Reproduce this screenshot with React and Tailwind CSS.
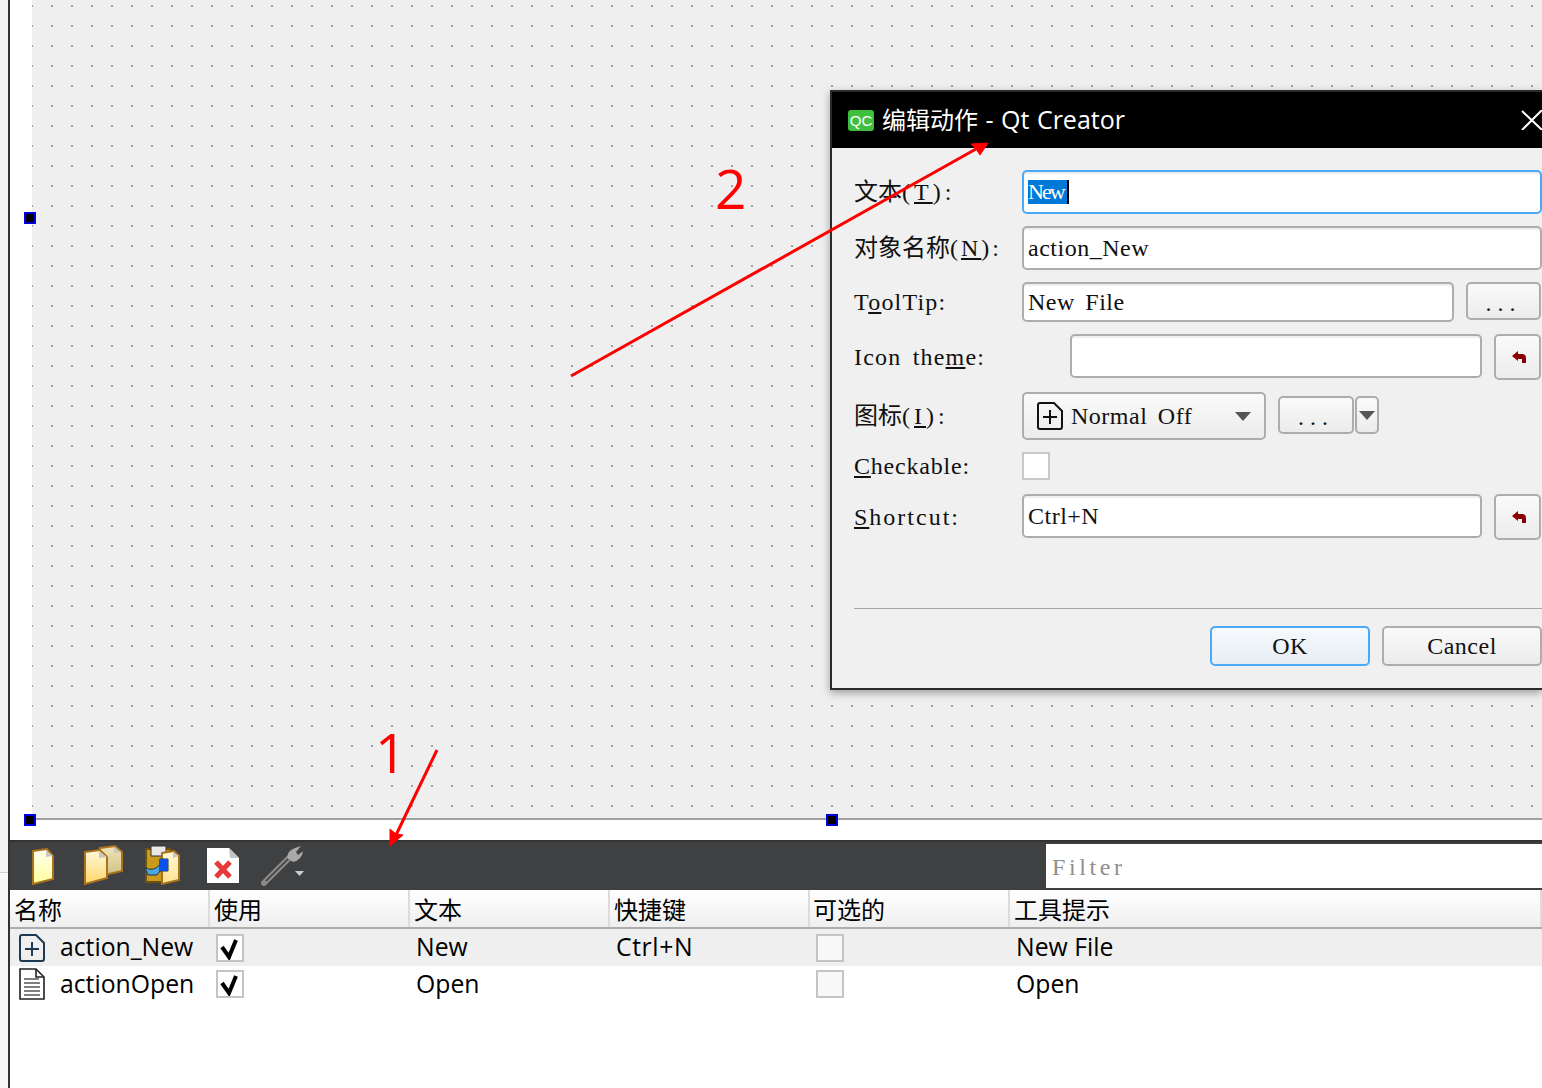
import React from "react"

const mono = "font-['Liberation_Serif','Noto_Sans_CJK_SC',serif] text-[24px] leading-none tracking-[0.5px] [word-spacing:4px] text-[#111]"
const sans = "font-['Open_Sans','Noto_Sans_CJK_SC',sans-serif] text-[24.75px] leading-none text-black"
const field = "flex items-center bg-white rounded-[5px] border-2 border-[#adadad] pl-1 shadow-[inset_0_2px_0_#eeeeee]"
const btn = "flex items-center justify-center rounded-[5px] border-2 border-[#adadad] bg-gradient-to-b from-[#fafafa] to-[#ececec]"

function Cjk({ children }) {
  return <span className="text-[24px] tracking-normal">{children}</span>
}

function Label({ children, width = "w-[168px]", tracking = "!tracking-[1.2px]" }) {
  return <div className={`${mono} ${width} ${tracking} shrink-0 self-center whitespace-pre`}>{children}</div>
}

function Reset({ className = "" }) {
  return (
    <button className={`${btn} w-[47px] pl-[2px] ${className}`}>
      <svg width="14" height="12" viewBox="0 0 14 12" fill="#8b0000">
        <path d="M0 5 L6 0 V3 H10 Q14 3 14 7 V12 H10 V8 H6 V10 Z" />
      </svg>
    </button>
  )
}

function FilePlus({ stroke = "#111", className = "" }) {
  return (
    <svg width="26" height="28" viewBox="0 0 26 28" fill="none" stroke={stroke} strokeWidth="2" className={className}>
      <path d="M3 1 H17 L25 9 V25 a2 2 0 0 1 -2 2 H3 a2 2 0 0 1 -2 -2 V3 a2 2 0 0 1 2 -2 Z" />
      <path d="M13 8 V22 M6 15 H20" />
    </svg>
  )
}

function FileLines() {
  return (
    <svg width="26" height="32" viewBox="0 0 26 32" fill="white" stroke="#222" strokeWidth="1.6">
      <path d="M1 1 H17 L25 9 V31 H1 Z" />
      <path d="M17 1 V9 H25" fill="none" />
      <path d="M5 11 H20 M5 15 H21 M5 19 H21 M5 23 H21 M5 27 H21" stroke="#555" strokeWidth="1.5" />
    </svg>
  )
}

function Check({ checked }) {
  return (
    <div className={`w-[28px] h-[28px] border-2 border-[#c4c4c4] ${checked ? "bg-white" : "bg-[#f8f8f8]"}`}>
      {checked && (
        <svg width="24" height="24" viewBox="0 0 24 24" fill="none" stroke="#000" strokeWidth="4">
          <path d="M4 11 L11 21 L18 4" />
        </svg>
      )}
    </div>
  )
}

function Doc({ d, fold, id, from, to }) {
  return (
    <>
      <defs>
        <linearGradient id={id} x1="0" y1="0" x2="0" y2="1">
          <stop offset="0" stopColor={from} />
          <stop offset="1" stopColor={to} />
        </linearGradient>
      </defs>
      <path d={d} fill={`url(#${id})`} stroke="#a9721d" strokeWidth="2" />
      <path d={fold} fill="#c8c8c0" />
    </>
  )
}

function ToolIcons() {
  return (
    <>
      <svg width="26" height="42" viewBox="30 844 26 42" className="ml-[20px] shrink-0">
        <Doc id="n1" from="#fffff0" to="#ffff9c" d="M33 851 L47 849 L53 856 V879 L33 884 Z" fold="M46 850 L53 856 L46 857 Z" />
      </svg>
      <svg width="42" height="42" viewBox="82 844 42 42" className="ml-[26px] shrink-0">
        <Doc id="o1" from="#efe6b8" to="#cfc083" d="M100 848 L115 846 L122 852 V871 L100 876 Z" fold="M114 847 L121 852 L114 853 Z" />
        <Doc id="o2" from="#fff8dc" to="#ffd86a" d="M85 852 L100 850 L107 857 V878 L85 884 Z" fold="M99 851 L107 857 L99 858 Z" />
      </svg>
      <svg width="39" height="42" viewBox="143 844 39 42" className="ml-[19px] shrink-0">
        <path d="M146 849 H170 V882 H146 Z" fill="#c99a1b" stroke="#6e5208" strokeWidth="2" />
        <path d="M151 846 H166 V856 H151 Z" fill="#e8e8e8" stroke="#333" />
        <Doc id="s1" from="#fff8dc" to="#ffe28a" d="M162 853 L174 851 L179 856 V880 L162 884 Z" fold="M173 852 L179 856 L173 858 Z" />
        <path d="M145 868 Q155 872 160 864 V859 H168 V871 H160 L157 875 H148 Z" fill="#49a7dd" stroke="#234" strokeWidth="1" />
        <path d="M159 859 H168 V871 H159 Z" fill="#0a52f0" />
      </svg>
      <svg width="36" height="42" viewBox="205 844 36 42" className="ml-[23px] shrink-0">
        <path d="M207 848 H229 L239 858 V883 H207 Z" fill="#fff" />
        <path d="M229 848 L239 858 H230 Z" fill="#c4c4c4" />
        <path d="M216 862 L230 877 M230 862 L216 877" stroke="#e83a3a" strokeWidth="5" />
      </svg>
      <svg width="46" height="42" viewBox="260 844 46 42" className="ml-[19px] shrink-0">
        <path d="M264 883 L290 857" stroke="#8a8a8a" strokeWidth="6" strokeLinecap="round" />
        <path d="M266 881 L290 857" stroke="#3c3c3c" strokeWidth="1.6" />
        <path d="M287 858 Q288 850 295 848 L301 846 L296 852 L298 855 L303 851 Q302 860 293 862 Z" fill="#a8a8a8" />
        <path d="M295 871 H304 L299.500 876 Z" fill="#cccccc" />
      </svg>
    </>
  )
}

const cols = [
  { w: "w-[200px]", head: "名称", pl: "pl-[4px]" },
  { w: "w-[200px]", head: "使用", pl: "pl-[4px]" },
  { w: "w-[200px]", head: "文本", pl: "pl-[4px]" },
  { w: "w-[200px]", head: "快捷键", pl: "pl-[4px]" },
  { w: "w-[200px]", head: "可选的", pl: "pl-[3px]" },
  { w: "flex-1", head: "工具提示", pl: "pl-[4px]" },
]

const rows = [
  { name: "action_New", text: "New", key: "Ctrl+N", tip: "New File", bg: "bg-[#efefef] h-[37px]", icon: <FilePlus stroke="#1d3a55" /> },
  { name: "actionOpen", text: "Open", key: "", tip: "Open", bg: "bg-white h-[36px]", icon: <FileLines /> },
]

function ActionTable() {
  return (
    <div className="flex flex-col flex-1 bg-white">
      <div className="flex h-[39px] border-b-2 border-[#adadad] bg-gradient-to-b from-white to-[#efefef]">
        {cols.map((c) => (
          <div key={c.head} className={`${c.w} ${c.pl} ${sans} !text-[24px] flex items-center border-r-2 border-[#dcdcdc] pt-[3px]`}>
            {c.head}
          </div>
        ))}
      </div>
      {rows.map((r) => (
        <div key={r.name} className={`flex items-center ${r.bg} ${sans}`}>
          <div className="w-[198px] flex items-center pl-[9px] gap-[15px]">
            {r.icon}
            <span>{r.name}</span>
          </div>
          <div className="w-[200px] pl-[8px]"><Check checked /></div>
          <div className="w-[200px] pl-[8px]">{r.text}</div>
          <div className="w-[200px] pl-[8px] tracking-[0.6px]">{r.key}</div>
          <div className="w-[200px] pl-[8px]"><Check /></div>
          <div className="flex-1 pl-[8px]">{r.tip}</div>
        </div>
      ))}
    </div>
  )
}

function EditDialog() {
  return (
    <div className="absolute left-[830px] top-[90px] w-[712px] flex flex-col border-2 border-r-0 border-[#2b2b2b] bg-[#f0f0f0] shadow-[0_3px_8px_rgba(0,0,0,0.35)]">
      <div className="flex items-center h-[56px] bg-black pl-4">
        <div className="flex items-center justify-center w-[26px] h-[21px] rounded-[3px] bg-[#3fbf3f] font-['Liberation_Sans',sans-serif] text-[15px] leading-none text-white">
          QC
        </div>
        <div className="ml-2 -translate-y-px font-['Open_Sans','Noto_Sans_CJK_SC',sans-serif] text-[24px] leading-none text-white whitespace-pre">
          编辑动作<span className="text-[25px] [word-spacing:1px]"> - Qt Creator</span>
        </div>
        <svg width="21" height="20" viewBox="0 0 21 20" stroke="#fff" strokeWidth="2" className="ml-auto">
          <path d="M1 1 L21 20 M21 0 L1 20" />
        </svg>
      </div>

      <div className="flex flex-col pl-[22px] pt-[22px] pb-[22px]">
        <div className="flex h-[44px]">
          <Label tracking="!tracking-[4px]"><Cjk>文本</Cjk>(<u>T</u>):</Label>
          <div className={`${field} flex-1 !border-[#4aaaf7] ${mono}`}>
            <span className="h-6 flex items-center bg-[#0078d7] text-white text-[22px] tracking-[-2px] border-r-2 border-black pr-[3px]">New</span>
          </div>
        </div>
        <div className="flex h-[44px] mt-3">
          <Label tracking="!tracking-[3px]"><Cjk>对象名称</Cjk>(<u>N</u>):</Label>
          <div className={`${field} flex-1 ${mono}`}>action_New</div>
        </div>
        <div className="flex items-start h-[40px] mt-3">
          <Label>T<u>o</u>olTip:</Label>
          <div className={`${field} w-[432px] h-[40px] ${mono}`}>New File</div>
          <button className={`${btn} w-[75px] h-[38px] ml-3 pt-1 ${mono} !tracking-[6px]`}>...</button>
        </div>
        <div className="flex items-start h-[46px] mt-3">
          <Label width="w-[216px]">Icon the<u>m</u>e:</Label>
          <div className={`${field} w-[412px] h-[44px]`} />
          <Reset className="h-[46px] ml-3" />
        </div>
        <div className="flex items-start h-[48px] mt-3">
          <Label tracking="!tracking-[4px]"><Cjk>图标</Cjk>(<u>I</u>):</Label>
          <button className={`${btn} w-[244px] h-[48px] !justify-start pl-[13px] ${mono}`}>
            <FilePlus />
            <span className="ml-2">Normal Off</span>
            <svg width="16" height="9" viewBox="0 0 16 9" fill="#555" className="ml-auto mr-[13px]">
              <path d="M0 0 H16 L8 9 Z" />
            </svg>
          </button>
          <button className={`${btn} w-[76px] h-[38px] ml-3 mt-1 pt-1 ${mono} !tracking-[6px]`}>...</button>
          <button className={`${btn} w-[24px] h-[38px] ml-px mt-1`}>
            <svg width="16" height="9" viewBox="0 0 16 9" fill="#555"><path d="M0 0 H16 L8 9 Z" /></svg>
          </button>
        </div>
        <div className="flex items-center h-[28px] mt-3">
          <Label tracking="!tracking-[0.8px]"><u>C</u>heckable:</Label>
          <div className="w-[28px] h-[28px] bg-white border-2 border-[#c8c8c8]" />
        </div>
        <div className="flex items-start h-[46px] mt-[14px]">
          <Label tracking="!tracking-[2px]"><u>S</u>hortcut:</Label>
          <div className={`${field} w-[460px] h-[44px] ${mono}`}>Ctrl+N</div>
          <Reset className="h-[46px] ml-3" />
        </div>
        <div className="h-px bg-[#a8a8a8] mt-[68px]" />
        <div className="flex justify-end gap-3 mt-[17px]">
          <button className={`${btn} w-[160px] h-[40px] !border-[#4aaaf7] !from-[#f6fafd] !to-[#e6edf3] ${mono}`}>OK</button>
          <button className={`${btn} w-[160px] h-[40px] ${mono}`}>Cancel</button>
        </div>
      </div>
    </div>
  )
}

function Handle({ className }) {
  return <div className={`absolute w-3 h-3 bg-black border-2 border-[#0000e6] ${className}`} />
}

export default function App() {
  return (
    <div className="relative flex w-[1542px] h-[1088px] overflow-hidden bg-white">
      {/* left edge of the designer window */}
      <div className="flex flex-col w-2 shrink-0">
        <div className="h-[873px] bg-[#f4f4f4] border-b border-[#d0d0d0]" />
        <div className="flex-1 bg-[#f7f7f7]" />
      </div>
      <div className="w-[2px] shrink-0 bg-[#333]" />

      <div className="flex flex-col flex-1 min-w-0">
        <div className="h-[840px] pl-[22px] bg-white shrink-0">
          <div className="h-[818px] bg-[#efefef] bg-[radial-gradient(circle,#a0a0a0_1.2px,transparent_1.3px)] bg-[length:20px_20px] bg-[position:10px_-4px]" />
          <div className="h-[2px] bg-[#a0a0a0]" />
        </div>

        <div className="flex items-center h-[50px] shrink-0 bg-[#3f4042] shadow-[inset_0_2px_0_#333]">
          <ToolIcons />
          <div className={`ml-auto mt-[2px] w-[496px] h-[44px] flex items-center bg-white pl-[6px] pt-[2px] ${mono} !tracking-[3.6px] !text-[#8f8f8f]`}>
            Filter
          </div>
        </div>

        <ActionTable />
      </div>

      <Handle className="left-[24px] top-[212px]" />
      <Handle className="left-[24px] top-[814px]" />
      <Handle className="left-[826px] top-[814px]" />

      <EditDialog />

      {/* red annotations pasted over the screenshot */}
      <div className="absolute left-[375px] top-[714px] font-['Open_Sans',sans-serif] text-[55px] leading-[76px] text-[#ff0000]">1</div>
      <div className="absolute left-[715px] top-[150px] font-['Open_Sans',sans-serif] text-[55px] leading-[76px] text-[#ff0000]">2</div>
      <svg className="absolute left-0 top-0 pointer-events-none" width="1542" height="1088" viewBox="0 0 1542 1088" fill="#ff0000" stroke="#ff0000">
        <path d="M437 750 L396 835" strokeWidth="3" />
        <path d="M390 846 L390 829 L396 834 L403 835 Z" strokeWidth="1" />
        <path d="M571 376 L976 149" strokeWidth="3" />
        <path d="M988 143 L971 144 L976 149 L980 155 Z" strokeWidth="1" />
      </svg>
    </div>
  )
}
